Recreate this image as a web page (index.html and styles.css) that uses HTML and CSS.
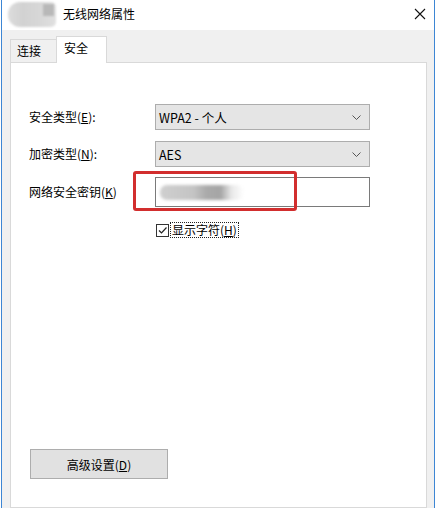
FILE: index.html
```html
<!DOCTYPE html>
<html lang="zh-CN">
<head>
<meta charset="utf-8">
<title>无线网络属性</title>
<link rel="stylesheet" href="styles.css">
</head>
<body>
<div class="window">
  <div class="titlebar">
    <div class="app-icon"><span class="app-icon-dark"></span></div>
    <span class="title">无线网络属性</span>
    <svg class="close" width="12" height="12" viewBox="0 0 12 12"><path d="M1 1 L11 11 M11 1 L1 11" stroke="#111" stroke-width="1.1" fill="none"/></svg>
  </div>
  <div class="client">
    <div class="tabs">
      <div class="tab">连接</div>
      <div class="tab tab-active">安全</div>
    </div>
    <div class="panel">
      <div class="row">
        <label class="label">安全类型(<u>E</u>):</label>
        <div class="select"><span>WPA2 - 个人</span><svg class="chev" width="9" height="5" viewBox="0 0 9 5"><path d="M0.5 0.5 L4.5 4.5 L8.5 0.5" stroke="#555" stroke-width="1" fill="none"/></svg></div>
      </div>
      <div class="row row-2">
        <label class="label">加密类型(<u>N</u>):</label>
        <div class="select"><span>AES</span><svg class="chev" width="9" height="5" viewBox="0 0 9 5"><path d="M0.5 0.5 L4.5 4.5 L8.5 0.5" stroke="#555" stroke-width="1" fill="none"/></svg></div>
      </div>
      <div class="row row-3">
        <label class="label">网络安全密钥(<u>K</u>)</label>
        <div class="input"><span class="blurred-key"></span></div>
      </div>
      <div class="check-row">
        <span class="checkbox"><svg width="11" height="11" viewBox="0 0 11 11"><path d="M2 5.5 L4.5 8 L9.5 2.5" stroke="#222" stroke-width="1.2" fill="none"/></svg></span>
        <span class="check-label">显示字符(<u>H</u>)</span>
      </div>
      <button class="btn">高级设置(<u>D</u>)</button>
    </div>
  </div>
  <div class="annotation"></div>
</div>
</body>
</html>
```
FILE: styles.css
```css
* { box-sizing: border-box; }
html, body { margin: 0; padding: 0; background: #ffffff; }
body {
  font-family: "Noto Sans CJK SC", "Noto Sans", sans-serif;
  font-size: 12px;
  color: #000;
}
.window {
  position: relative;
  margin-left: 1px;
  width: 434px;
  height: 508px;
  border-left: 1px solid #3d86d4;
  border-right: 1px solid #3d86d4;
  display: flex;
  flex-direction: column;
  overflow: hidden;
}
.titlebar {
  height: 30px;
  background: #ffffff;
  display: flex;
  align-items: center;
  flex: none;
  padding-bottom: 2px;
}
.app-icon {
  margin-left: 6px;
  width: 48px;
  height: 25px;
  border-radius: 12px 5px 5px 12px;
  background: linear-gradient(90deg, #dcdcdc 0%, #d2d2d2 30%, #d6d6d6 60%, #e0e0e0 100%);
  filter: blur(1.2px);
  position: relative;
}
.app-icon-dark {
  display: block;
  position: absolute;
  right: 2px;
  top: 2px;
  width: 11px;
  height: 12px;
  background: #b8b8b8;
}
.title {
  margin-left: 7px;
  line-height: 16px;
}
.close {
  margin-left: auto;
  margin-right: 8px;
}
.client {
  flex: 1;
  background: #f0f0f0;
  padding: 6px 7px 0 8px;
  display: flex;
  flex-direction: column;
}
.tabs {
  display: flex;
  align-items: flex-end;
  height: 26px;
  flex: none;
}
.tab {
  height: 23px;
  width: 47px;
  border: 1px solid #d9d9d9;
  border-bottom: none;
  background: #f0f0f0;
  padding-left: 6px;
  line-height: 22px;
}
.tab-active {
  position: relative;
  z-index: 1;
  height: 27px;
  width: 51px;
  margin-bottom: -1px;
  margin-left: -1px;
  background: #ffffff;
  padding-left: 7px;
  line-height: 22px;
  border-color: #d9d9d9;
}
.panel {
  flex: 1;
  background: #ffffff;
  border: 1px solid #d9d9d9;
  padding: 41px 0 0 18px;
}
.row {
  display: flex;
  align-items: center;
}
.row-2 { margin-top: 11px; }
.row-3 { margin-top: 10px; }
.label {
  width: 126px;
  flex: none;
  line-height: 16px;
}
u { text-decoration: underline; text-underline-offset: 1px; }
.select {
  width: 215px;
  height: 26px;
  border: 1px solid #adadad;
  background: #e5e5e5;
  display: flex;
  align-items: center;
  padding-left: 3px;
  padding-right: 8px;
  font-size: 12.5px;
}
.chev { margin-left: auto; }
.input {
  width: 215px;
  height: 30px;
  border: 1px solid #7a7a7a;
  background: #fff;
  display: flex;
  align-items: center;
  padding-left: 4px;
}
.blurred-key {
  display: block;
  width: 84px;
  height: 15px;
  border-radius: 7px;
  background: linear-gradient(90deg, #cfcfcf 0%, #c4c4c4 40%, #aaaaaa 55%, #a5a5a5 72%, #e8e8e8 85%, #ffffff 100%);
  filter: blur(1.5px);
}
.check-row {
  margin-top: 15px;
  margin-left: 127px;
  display: flex;
  align-items: center;
  height: 16px;
}
.checkbox {
  width: 13px;
  height: 13px;
  border: 1px solid #333;
  background: #fff;
  display: flex;
  align-items: center;
  justify-content: center;
}
.check-label {
  margin-left: 1px;
  border: 1px dotted #222;
  line-height: 14px;
  padding: 0 1px;
}
.btn {
  display: block;
  margin-top: 211px;
  margin-left: 1px;
  width: 138px;
  height: 30px;
  background: #e1e1e1;
  border: 1px solid #adadad;
  font-family: inherit;
  font-size: 12px;
  color: #000;
  padding: 0;
}
.annotation {
  position: absolute;
  left: 131px;
  top: 171px;
  width: 164px;
  height: 40px;
  border: 3px solid #d22e2e;
  border-radius: 3px;
  pointer-events: none;
}
```
